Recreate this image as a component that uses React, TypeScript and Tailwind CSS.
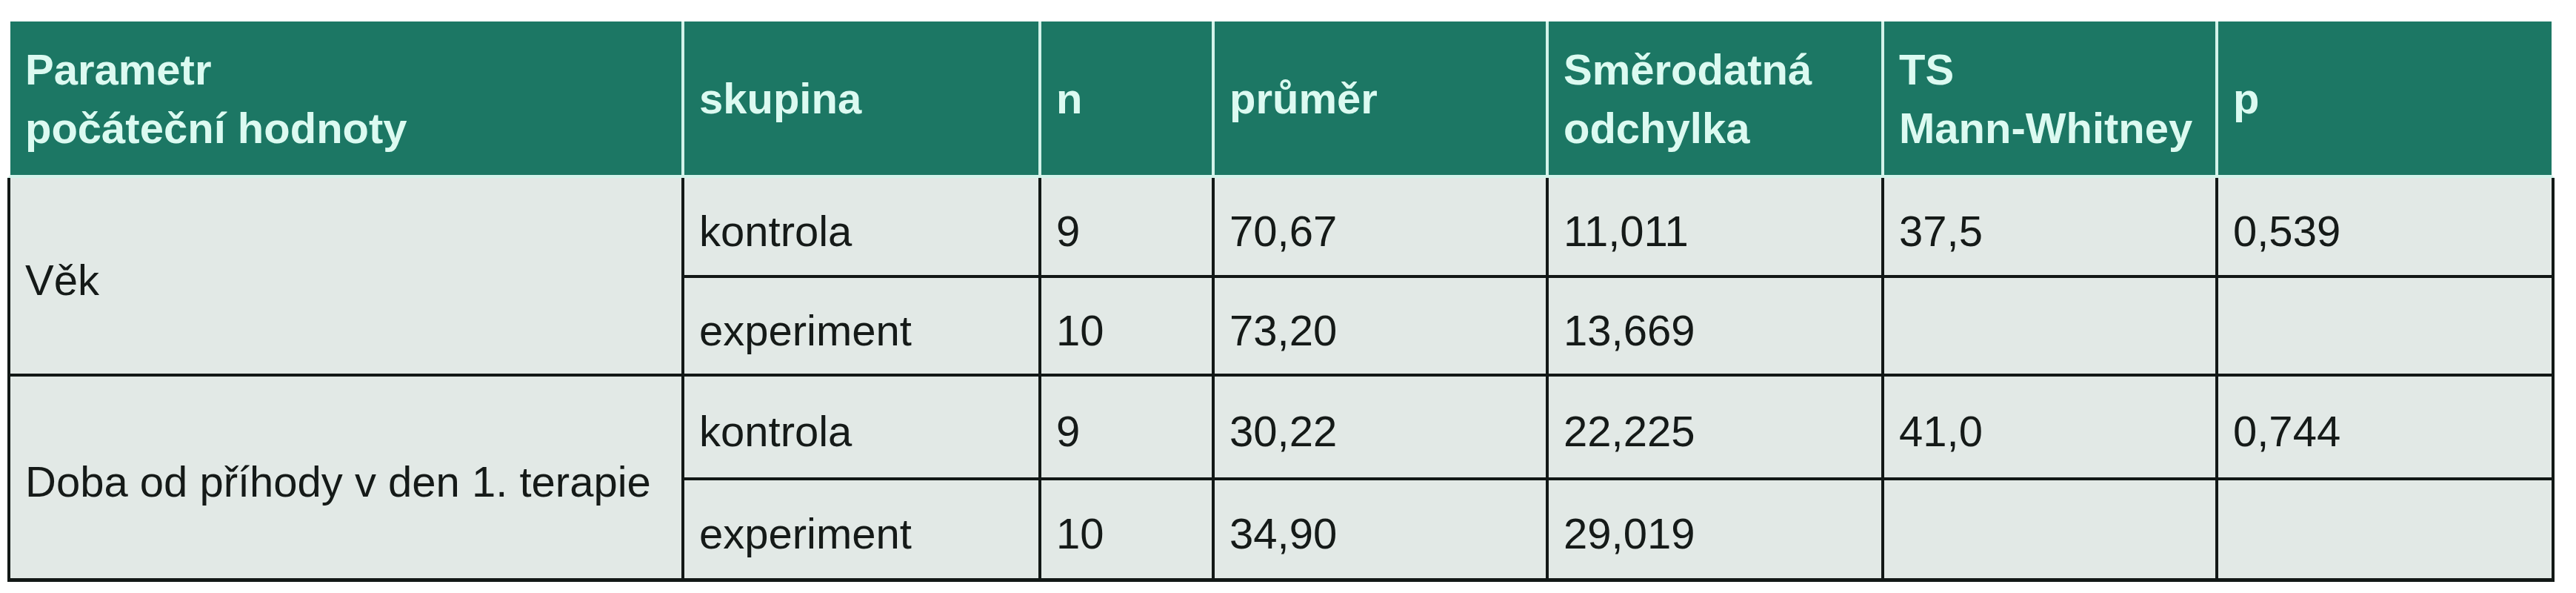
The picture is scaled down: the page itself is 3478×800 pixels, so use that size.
const head = [
  ["Parametr", "počáteční hodnoty"],
  ["skupina"],
  ["n"],
  ["průměr"],
  ["Směrodatná", "odchylka"],
  ["TS", "Mann-Whitney"],
  ["p"],
];

type Row = { group?: string; cells: string[]; last?: boolean };

const rows: Row[] = [
  { group: "Věk", cells: ["kontrola", "9", "70,67", "11,011", "37,5", "0,539"] },
  { cells: ["experiment", "10", "73,20", "13,669", "", ""] },
  { group: "Doba od příhody v den 1. terapie", cells: ["kontrola", "9", "30,22", "22,225", "41,0", "0,744"] },
  { cells: ["experiment", "10", "34,90", "29,019", "", ""], last: true },
];

const headCell =
  "bg-[#1c7764] text-[#dcfaf1] font-bold flex flex-col justify-center pl-5 leading-[79px] border-b-4 border-r-4 border-[#d3f3ea]";

const bodyCell =
  "bg-[#e2e9e6] text-[#151a18] flex items-center pl-5 pt-[13px] leading-[1.15] border-r-4 border-[#121816]";

export default function App() {
  return (
    <div className="min-h-screen bg-white pt-[29px] pl-[10px] font-['Liberation_Sans',Arial,sans-serif] text-[58px]">
      <div className="grid w-[3443px] grid-cols-[914px_482px_234px_451px_453px_451px_454px] grid-rows-[211px_135px_133px_140px_137px]">
        {head.map((lines, i) => (
          <div
            key={i}
            className={
              headCell +
              (i === 0 ? " border-l-4 border-l-white pl-4" : "") +
              (i === head.length - 1 ? " border-r-white" : "")
            }
          >
            {lines.map((l) => (
              <span key={l} className="whitespace-nowrap">
                {l}
              </span>
            ))}
          </div>
        ))}

        {rows.map((r, ri) => (
          <div key={ri} className="contents">
            {r.group !== undefined && (
              <div
                className={
                  bodyCell +
                  " row-span-2 border-l-4 pl-4 " +
                  (ri === 2 ? "border-b-[5px]" : "border-b-4")
                }
              >
                <span className="whitespace-nowrap">{r.group}</span>
              </div>
            )}
            {r.cells.map((c, ci) => (
              <div
                key={ci}
                className={bodyCell + (r.last ? " border-b-[5px]" : " border-b-4")}
              >
                <span className="whitespace-nowrap">{c}</span>
              </div>
            ))}
          </div>
        ))}
      </div>
    </div>
  );
}
